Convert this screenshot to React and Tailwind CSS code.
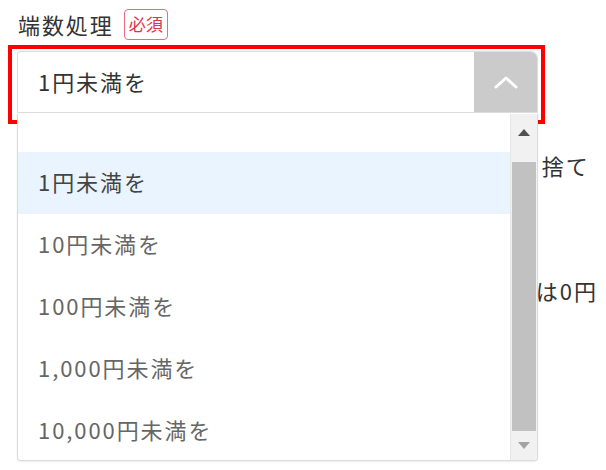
import React from 'react';

const options = ['1円未満を', '10円未満を', '100円未満を', '1,000円未満を', '10,000円未満を'];

function ChevronUp() {
  return (
    <svg width="26" height="16" viewBox="0 0 26 16" fill="none">
      <path d="M3 13 L13 4 L23 13" stroke="#fff" strokeWidth="3" strokeLinecap="round" strokeLinejoin="round" />
    </svg>
  );
}

function Scrollbar() {
  return (
    <div className="flex w-[27px] flex-col bg-[#f1f1f1] border-l border-[#e6e6e6]">
      <div className="flex h-[36px] items-center justify-center">
        <svg width="12" height="7" viewBox="0 0 12 7">
          <path d="M6 0 L12 7 L0 7 Z" fill="#505050" />
        </svg>
      </div>
      <div className="h-[12px]" />
      <div className="mx-auto h-[269px] w-[24px] bg-[#c1c1c1]" />
      <div className="flex flex-1 items-center justify-center">
        <svg width="12" height="7" viewBox="0 0 12 7">
          <path d="M0 0 L12 0 L6 7 Z" fill="#a3a3a3" />
        </svg>
      </div>
    </div>
  );
}

export default function App() {
  return (
    <div
      className="relative h-[470px] w-[606px] overflow-hidden bg-white text-[#333] tracking-[0.12em]"
      style={{ fontFamily: '"Noto Sans CJK JP", "Noto Sans", sans-serif' }}
    >
      <div className="flex items-center pl-[18px] pt-[8px]">
        <span className="text-[22px] leading-[32px]">端数処理</span>
        <span className="ml-[10px] flex h-[31px] items-center rounded-[4px] border-[1.5px] border-[#ec6a80] px-[4px] text-[17px] tracking-[0.02em] text-[#e3304c]">
          必須
        </span>
      </div>

      <div className="relative ml-[17px] mt-[11px] w-[521px]">
        <div className="flex h-[62px] overflow-hidden rounded-tr-[7px] rounded-tl-[3px] border border-[#dcdcdc]">
          <div className="flex flex-1 items-center pb-[2px] pl-[20px] text-[22px]">1円未満を</div>
          <div className="flex w-[63px] items-center justify-center bg-[#cbcbcb]">
            <ChevronUp />
          </div>
        </div>
        <div className="pointer-events-none absolute -left-[9px] -right-[7px] -top-[6px] -bottom-[11px] border-4 border-[#ff0000]" />
      </div>

      <div className="mt-[37px] pl-[494px] text-[22px] leading-[30px]">切り捨て</div>
      <div className="mt-[95px] pl-[488px] text-[22px] leading-[30px]">場合は0円</div>

      <div className="absolute left-[17px] top-[114px] flex h-[347px] w-[521px] overflow-hidden rounded-b-[4px] border border-t-0 border-[#dcdcdc] bg-white shadow-[0_1px_2px_rgba(0,0,0,0.08)]">
        <div className="flex-1 overflow-hidden">
          <div className="h-[38px]" />
          {options.map((o, i) => (
            <div
              key={o}
              className={`flex h-[62px] items-center pb-[3px] pl-[20px] text-[22px] ${
                i === 0 ? 'bg-[#e9f4fe] text-[#444]' : 'text-[#666]'
              }`}
            >
              {o}
            </div>
          ))}
        </div>
        <Scrollbar />
      </div>
    </div>
  );
}
